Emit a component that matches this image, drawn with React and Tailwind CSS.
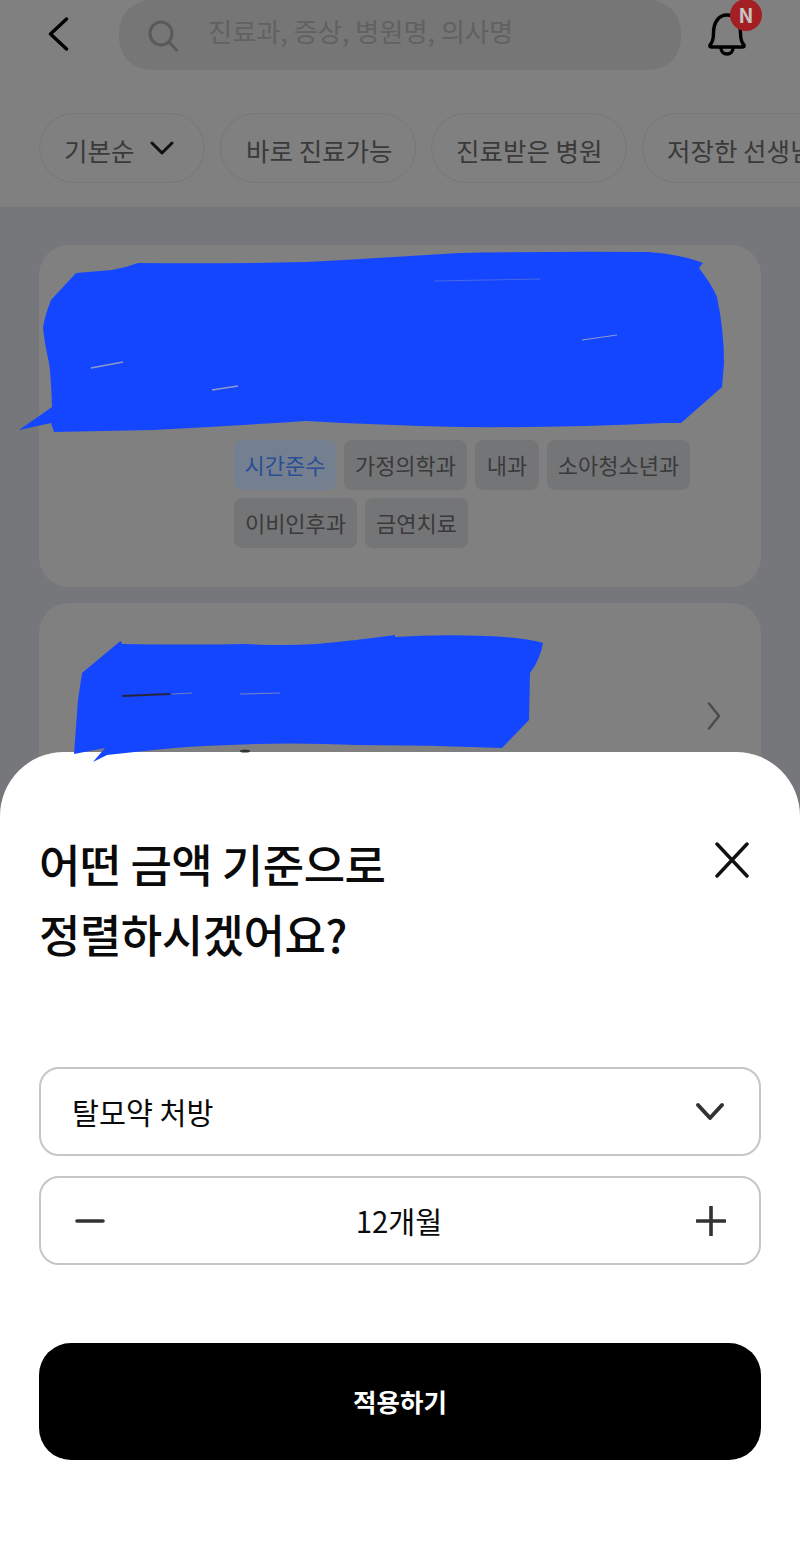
import React from "react";

const font = { fontFamily: '"Noto Sans CJK KR", "Noto Sans", sans-serif' };

function Chip({ w, pl, children }) {
  return (
    <div className={`${w} ${pl} h-[70px] shrink-0 rounded-[35px] border-[1.5px] border-[#777777] flex items-center text-[25.5px] text-[#3a3a3a] whitespace-nowrap`}>
      {children}
    </div>
  );
}

function Tag({ w, blue, children }) {
  return (
    <div className={`${w} h-[50px] rounded-[8px] flex items-center justify-center text-[22px] pb-[2px] whitespace-nowrap ${blue ? "bg-[#74808f] text-[#2a4e96]" : "bg-[#747577] text-[#3a3a3a]"}`}>
      {children}
    </div>
  );
}

export default function App() {
  return (
    <div className="relative w-[800px] h-[1546px] overflow-hidden bg-[#76777a]" style={font}>
      <header className="h-[207px] bg-[#808080]">
        <div className="flex h-[70px] items-center pl-[48px]">
          <svg width="21" height="34" viewBox="0 0 21 34" fill="none" className="mt-[-2px] shrink-0">
            <path d="M18.5 2 L2.5 17 L18.5 32" stroke="#000" strokeWidth="3.4" strokeLinecap="round" strokeLinejoin="round" />
          </svg>
          <div className="ml-[50px] w-[562px] h-[70px] rounded-[32px] bg-[#767676] flex items-center pl-[29px]">
            <svg width="30" height="32" viewBox="0 0 30 32" fill="none" className="shrink-0 mt-[2px]">
              <ellipse cx="13" cy="13.5" rx="11" ry="11.5" stroke="#5a5a5a" strokeWidth="3" />
              <path d="M21 22 L28.5 30" stroke="#5a5a5a" strokeWidth="3" strokeLinecap="round" />
            </svg>
            <span className="ml-[30px] text-[26.25px] leading-none text-[#616161] mt-[-8px] whitespace-nowrap">진료과, 증상, 병원명, 의사명</span>
          </div>
          <div className="relative ml-[26px] w-[40px] h-[58px]">
            <svg width="40" height="44" viewBox="0 0 40 44" fill="none" className="absolute left-0 top-[6px]">
              <path d="M3 33 C6 30 6.5 27 6.5 21 C6.5 10 12 3 20 3 C28 3 33.5 10 33.5 21 C33.5 27 34 30 37 33 C37.5 34.5 37 35 35 35 L5 35 C3 35 2.5 34.5 3 33 Z" stroke="#000" strokeWidth="3.4" strokeLinejoin="round" />
              <path d="M14 36 C14 44 26 44 26 36" stroke="#000" strokeWidth="3.4" />
            </svg>
            <div className="absolute left-[23px] top-[-7px] w-[32px] h-[32px] rounded-full bg-[#a31f23] flex items-center justify-center text-[#c4c4c4] text-[20px] font-bold leading-none">N</div>
          </div>
        </div>
        <div className="mt-[43px] flex gap-[15px] pl-[39px] overflow-hidden">
          <Chip w="w-[166px]" pl="pl-[24px]">
            <span className="mt-[4px]">기본순</span>
            <svg width="24" height="14" viewBox="0 0 24 14" fill="none" className="ml-[16px]"><path d="M2 2 L12 12 L22 2" stroke="#111" strokeWidth="3" strokeLinecap="round" strokeLinejoin="round" /></svg>
          </Chip>
          <Chip w="w-[196px]" pl="pl-[25px]"><span className="mt-[4px]">바로 진료가능</span></Chip>
          <Chip w="w-[196px]" pl="pl-[24px]"><span className="mt-[4px]">진료받은 병원</span></Chip>
          <Chip w="w-[220px]" pl="pl-[24px]"><span className="mt-[4px]">저장한 선생님</span></Chip>
        </div>
      </header>

      <main className="px-[39px] pt-[38px] flex flex-col gap-[16px]">
        <section className="h-[342px] rounded-[30px] bg-[#808080] pl-[195px] pt-[195px]">
          <div className="flex flex-wrap gap-[8px] w-[480px]">
            <Tag w="w-[102px]" blue>시간준수</Tag>
            <Tag w="w-[123px]">가정의학과</Tag>
            <Tag w="w-[64px]">내과</Tag>
            <Tag w="w-[143px]">소아청소년과</Tag>
            <Tag w="w-[123px]">이비인후과</Tag>
            <Tag w="w-[103px]">금연치료</Tag>
          </div>
        </section>
        <section className="h-[400px] rounded-[30px] bg-[#808080] flex justify-end pr-[40px] pt-[99px]">
          <svg width="14" height="28" viewBox="0 0 14 28" fill="none">
            <path d="M2 1.5 L12 14 L2 26.5" stroke="#4a4a4a" strokeWidth="2.4" strokeLinecap="round" strokeLinejoin="round" />
          </svg>
        </section>
      </main>

      <section className="absolute left-0 right-0 top-[752px] h-[794px] rounded-t-[64px] bg-white px-[39px] pt-[77px]">
        <div className="flex justify-between">
          <h2 className="text-[45px] leading-[70px] font-medium text-[#0a0a0a] tracking-[-0.5px]">
            어떤 금액 기준으로<br />정렬하시겠어요?
          </h2>
          <svg width="36" height="36" viewBox="0 0 36 36" fill="none" className="mr-[11px] mt-[13px]">
            <path d="M3 2 L33 34 M33 2 L3 34" stroke="#111" strokeWidth="3.4" strokeLinecap="round" />
          </svg>
        </div>

        <div className="mt-[98px] h-[89px] rounded-[20px] border-2 border-[#c6c6c6] flex items-center justify-between pl-[31px] pr-[34px]">
          <span className="text-[29.3px] text-[#0a0a0a]">탈모약 처방</span>
          <svg width="30" height="20" viewBox="0 0 30 20" fill="none">
            <path d="M3 3 L15 16 L27 3" stroke="#333" strokeWidth="4" strokeLinecap="round" strokeLinejoin="round" />
          </svg>
        </div>
        <div className="mt-[20px] h-[89px] rounded-[20px] border-2 border-[#c6c6c6] flex items-center justify-between pl-[34px] pr-[33px]">
          <svg width="30" height="6" viewBox="0 0 30 6" fill="none">
            <path d="M2 3 H28" stroke="#333" strokeWidth="3.6" strokeLinecap="round" />
          </svg>
          <span className="text-[29.3px] text-[#0a0a0a] ml-[-3px]">12개월</span>
          <svg width="30" height="30" viewBox="0 0 30 30" fill="none">
            <path d="M1 15 H29 M15 1 V29" stroke="#333" strokeWidth="3.6" strokeLinecap="round" />
          </svg>
        </div>

        <button className="mt-[78px] w-full h-[117px] rounded-[32px] bg-black text-white text-[25.5px] font-bold">적용하기</button>
      </section>

      <svg className="absolute left-0 top-0 pointer-events-none" width="800" height="800" viewBox="0 0 800 800" fill="none">
        <path fill="#1446ff" d="M19 430 L52 407 Q51 375 49 363 Q44 340 43 327 Q46 312 51 300 L76 273 L112 270 Q125 268 138 263 Q220 264 306 262 Q380 258 459 253 Q560 251 648 252 Q680 254 703 263 L699 268 Q712 285 717 297 Q724 330 724 363 L722 387 L681 423 L663 423 Q560 428 459 427 Q380 425 306 421 Q230 426 153 430 L54 432 L51 423 Z" />
        <path d="M434 281 L540 279" stroke="#4a68e4" strokeWidth="1" />
        <path d="M91 368 L123 362" stroke="#8f9ac8" strokeWidth="1.6" />
        <path d="M212 390 L238 386" stroke="#8f9ac8" strokeWidth="1.6" />
        <path d="M582 340 L617 335" stroke="#8f9ac8" strokeWidth="1.2" />
        <path fill="#1446ff" d="M74 754 L78 700 L82 673 L118 643 L121 641 L122 644 Q190 645 245 644 Q285 646 316 644 Q360 640 395 635 L395 637 Q440 634 485 636 Q520 637 543 643 Q540 660 530 673 L529 720 L502 748 Q430 745 357 745 Q290 742 230 745 Q190 746 153 750 L107 755 L93 762 L105 748 Z" />
        <path d="M122 696 L170 694" stroke="#26263a" strokeWidth="2" />
        <path d="M172 694 L192 693 M240 694 L280 693" stroke="#6f80c8" strokeWidth="1.2" />
        <ellipse cx="245" cy="751" rx="5" ry="1.5" fill="#333333" />
      </svg>
    </div>
  );
}
